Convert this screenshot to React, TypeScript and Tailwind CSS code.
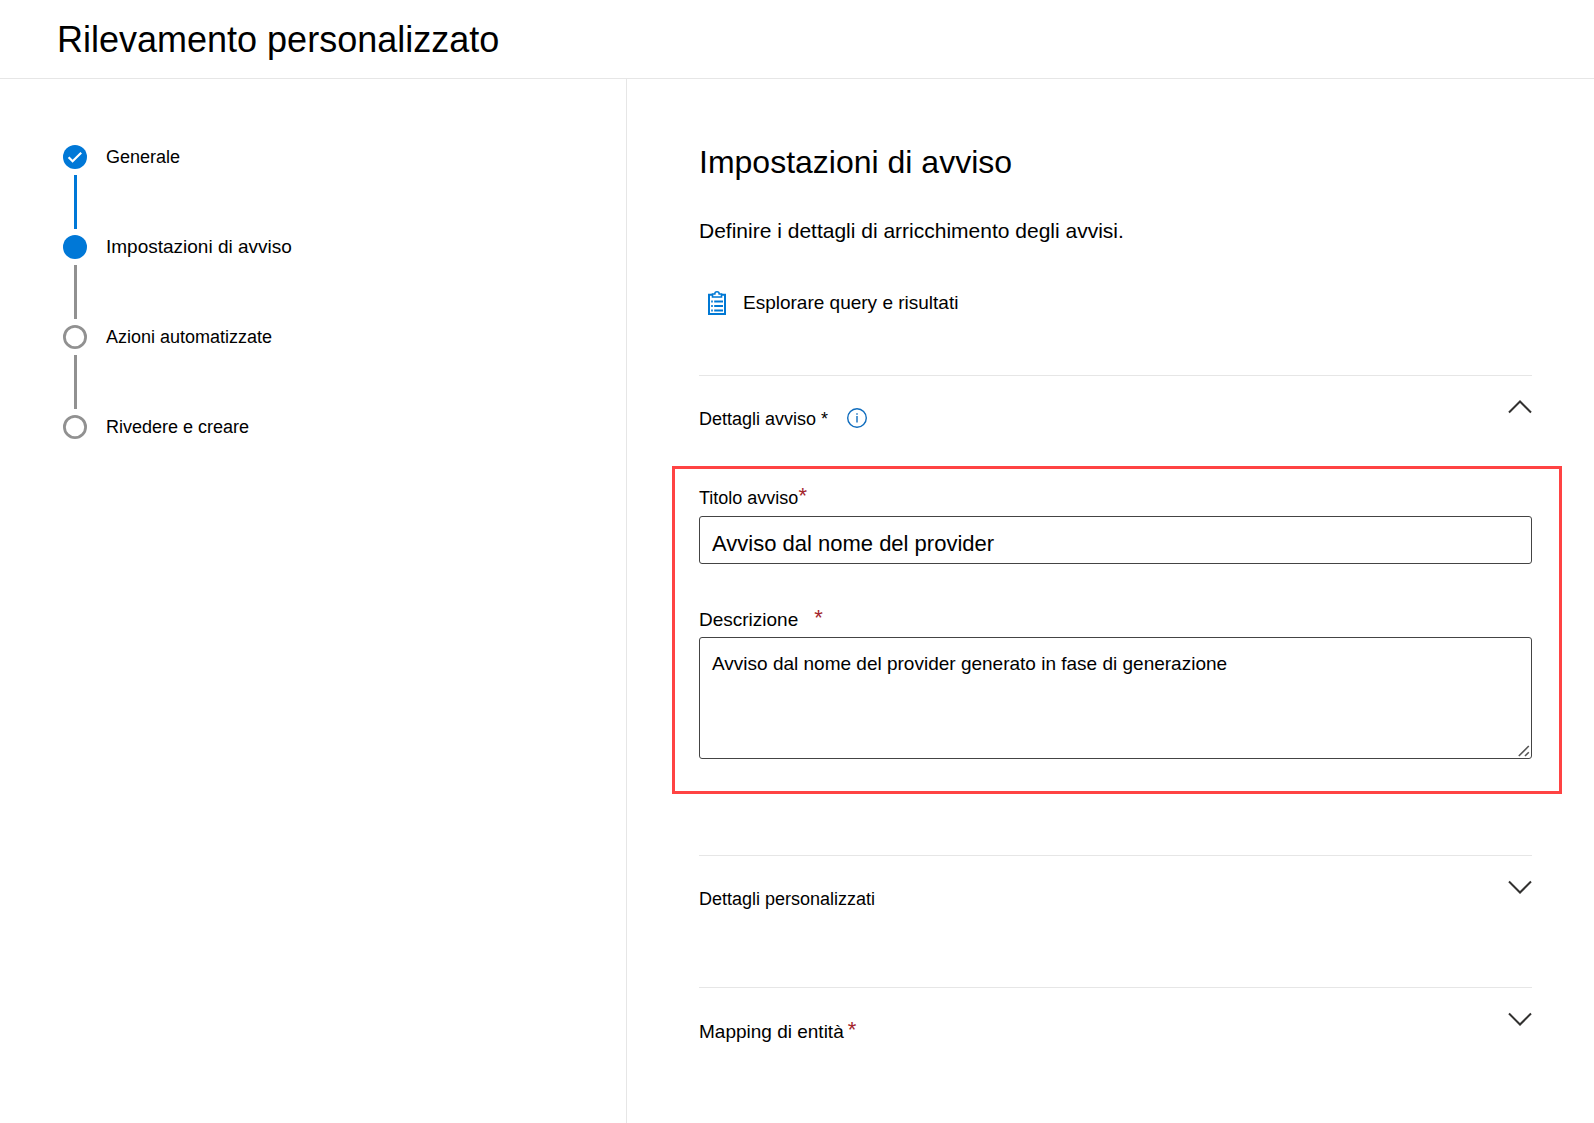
import { useState } from "react";
import type { ReactNode } from "react";

type StepState = "done" | "current" | "todo";

const steps: { label: string; state: StepState }[] = [
  { label: "Generale", state: "done" },
  { label: "Impostazioni di avviso", state: "current" },
  { label: "Azioni automatizzate", state: "todo" },
  { label: "Rivedere e creare", state: "todo" },
];

const StepMarker = ({ state }: { state: StepState }) => (
  <svg width="24" height="24" viewBox="0 0 24 24" fill="none" aria-hidden="true">
    {state === "todo" ? (
      <circle cx="12" cy="12" r="10.6" stroke="#919191" strokeWidth="2.8" />
    ) : (
      <circle cx="12" cy="12" r="12" fill="#0078d7" />
    )}
    {state === "done" && <path d="M5.6 12.3l4 4L18.2 7.8" stroke="#fff" strokeWidth="2.2" />}
  </svg>
);

const ClipboardIcon = () => (
  <svg width="18" height="24" viewBox="0 0 18 24" fill="none" stroke="#0078d4" aria-hidden="true">
    <path d="M4.5 3.8H1V23h16V3.8h-3.5" strokeWidth="2" />
    <path d="M4.5 6V3h2.3C6.8 1.5 7.6.8 9 .8s2.2.7 2.2 2.2h2.3v3z" strokeWidth="1.6" />
    <path d="M3.2 10.5h1.6M6.2 10.5H15M3.2 15h1.6M6.2 15H15M3.2 19.5h1.6M6.2 19.5H15" strokeWidth="1.8" />
  </svg>
);

const InfoIcon = () => (
  <svg width="20" height="20" viewBox="0 0 20 20" fill="none" aria-hidden="true">
    <circle cx="10" cy="10" r="9.3" stroke="#0f6cbd" strokeWidth="1.4" />
    <path d="M10 8v6.5M10 5.2v1.5" stroke="#0f6cbd" strokeWidth="1.4" />
  </svg>
);

const Chevron = ({ open }: { open: boolean }) => (
  <svg width="24" height="14" viewBox="0 0 24 14" fill="none" stroke="#323130" strokeWidth="2" aria-hidden="true">
    <path d={open ? "M1 12.5L12 1.5l11 11" : "M1 1.5l11 11 11-11"} />
  </svg>
);

const ResizeGrip = () => (
  <svg
    width="12"
    height="12"
    viewBox="0 0 12 12"
    fill="none"
    stroke="#555"
    strokeWidth="1.6"
    className="pointer-events-none absolute right-[2px] bottom-[2px]"
    aria-hidden="true"
  >
    <path d="M.8 11L10.8 1M7 11l3.8-3.8" />
  </svg>
);

const Required = () => <span className="text-[22px] leading-5 text-[#a4262c]">*</span>;

type SectionProps = {
  title: ReactNode;
  open: boolean;
  onToggle: () => void;
  info?: boolean;
};

const SectionHeader = ({ title, open, onToggle, info }: SectionProps) => (
  <div className="flex items-start justify-between border-t border-[#e6e6e6] pt-6">
    <div className="flex items-start gap-[19px] pt-2">
      <h2 className="leading-[22px]">{title}</h2>
      {info && (
        <button type="button" aria-label="Informazioni">
          <InfoIcon />
        </button>
      )}
    </div>
    <button type="button" aria-label="Espandi o comprimi" aria-expanded={open} onClick={onToggle}>
      <Chevron open={open} />
    </button>
  </div>
);

const App = () => {
  const [detailsOpen, setDetailsOpen] = useState(true);
  const [customOpen, setCustomOpen] = useState(false);
  const [mappingOpen, setMappingOpen] = useState(false);

  return (
    <div className="flex min-h-screen flex-col bg-white font-['Liberation_Sans',Arial,sans-serif] text-lg text-black">
      <header className="border-b border-[#e6e6e6] px-[57px] pt-5 pb-[18px]">
        <h1 className="text-4xl leading-10">Rilevamento personalizzato</h1>
      </header>

      <div className="grid grow grid-cols-[627fr_967fr]">
        <nav className="border-r border-[#e6e6e6] pt-[66px] pl-[63px]">
          <ol>
            {steps.map((step, index) => (
              <li key={step.label} className="flex gap-[19px]">
                <div className="flex flex-col items-center">
                  <StepMarker state={step.state} />
                  {index < steps.length - 1 && (
                    <span
                      className={`my-[6px] h-[54px] w-[3px] ${step.state === "done" ? "bg-[#0078d7]" : "bg-[#919191]"}`}
                    />
                  )}
                </div>
                <a href="#" className={`leading-6 ${step.state === "current" ? "text-[19px]" : "text-lg"}`}>
                  {step.label}
                </a>
              </li>
            ))}
          </ol>
        </nav>

        <main className="pt-[63px] pr-[62px] pl-[72px]">
          <h2 className="text-[32px] leading-10">Impostazioni di avviso</h2>
          <p className="mt-[37px] text-[21px] leading-6">Definire i dettagli di arricchimento degli avvisi.</p>

          <button type="button" className="mt-12 ml-[9px] flex items-center gap-[17px] text-[19px] leading-6">
            <ClipboardIcon />
            Esplorare query e risultati
          </button>

          <section className="mt-[60px]">
            <SectionHeader
              title="Dettagli avviso *"
              info
              open={detailsOpen}
              onToggle={() => setDetailsOpen(!detailsOpen)}
            />
            {detailsOpen && (
              <div className="mt-9 -mr-[30px] -ml-[27px] border-3 border-[#ff4343] pt-[17px] pr-[27px] pb-8 pl-6">
                <label htmlFor="title" className="flex items-start leading-6">
                  Titolo avviso
                  <Required />
                </label>
                <input
                  id="title"
                  defaultValue="Avviso dal nome del provider"
                  className="mt-[6px] block h-12 w-full rounded-[3px] border border-[#444] px-3 pt-2 text-[22px]"
                />
                <label htmlFor="description" className="mt-11 flex items-start gap-4 text-[19px] leading-6">
                  Descrizione
                  <Required />
                </label>
                <div className="relative mt-[5px]">
                  <textarea
                    id="description"
                    defaultValue="Avviso dal nome del provider generato in fase di generazione"
                    className="block h-[122px] w-full resize-y rounded-[3px] border border-[#444] px-3 py-[14px] text-[19px] leading-6 [&::-webkit-resizer]:hidden"
                  />
                  <ResizeGrip />
                </div>
              </div>
            )}
          </section>

          <section className="mt-[61px]">
            <SectionHeader title="Dettagli personalizzati" open={customOpen} onToggle={() => setCustomOpen(!customOpen)} />
          </section>

          <section className="mt-[77px]">
            <SectionHeader
              title={
                <span className="flex items-start gap-1 text-[19px] leading-6">
                  Mapping di entità <Required />
                </span>
              }
              open={mappingOpen}
              onToggle={() => setMappingOpen(!mappingOpen)}
            />
          </section>
        </main>
      </div>
    </div>
  );
};

export default App;
